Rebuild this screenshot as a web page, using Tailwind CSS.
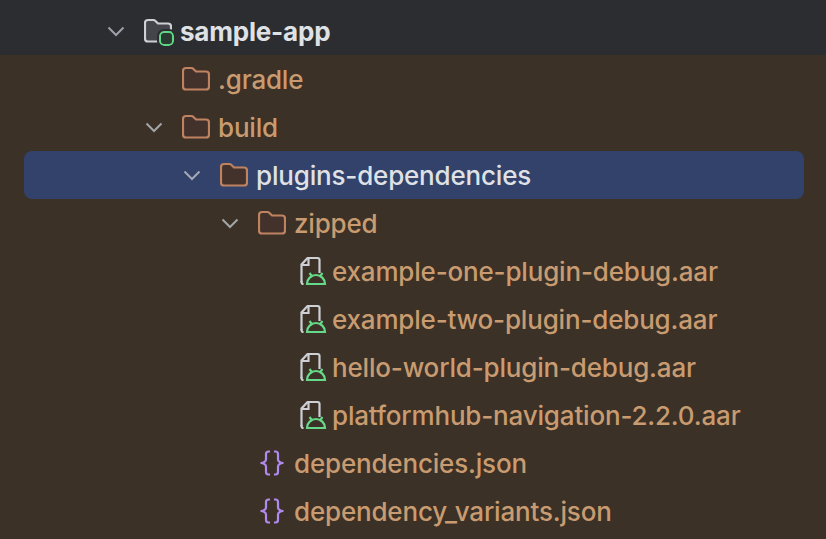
<!DOCTYPE html>
<html lang="en">
<head>
  <meta charset="UTF-8" />
  <title>Project tree</title>
  <script src="https://cdn.jsdelivr.net/npm/@tailwindcss/browser@4"></script>
</head>
<body class="w-[826px] h-[539px] overflow-hidden bg-[#3b3126] font-['Inter','Liberation_Sans',sans-serif] font-[450] text-[26px] tracking-[-0.18px] text-[#c99b70]">

  <svg class="hidden">
    <symbol id="chevron" viewBox="0 0 28 28"><path d="M6.500 10.500 14 18l7.500-7.500" fill="none" stroke="currentColor" stroke-width="2"/></symbol>
    <symbol id="folder" viewBox="0 0 28 28"><path d="M4 3h5.500a2.500 2.500 0 0 1 1.700.7L14 6.500h10a3 3 0 0 1 3 3v12a3 3 0 0 1-3 3H4a3 3 0 0 1-3-3V6a3 3 0 0 1 3-3z" fill="#43322b" stroke="#c08361" stroke-width="2.200"/></symbol>
    <symbol id="aar" viewBox="0 0 28 32">
      <path d="M2.500 27V9.500l6-6.500h10a2 2 0 0 1 2 2v13" fill="none" stroke="#ced0d6" stroke-width="2.200"/>
      <path d="M9.500 3v7h-7" fill="none" stroke="#ced0d6" stroke-width="2.200"/>
      <path d="M2.500 26v1a2 2 0 0 0 2 2" fill="none" stroke="#ced0d6" stroke-width="2.200"/>
      <path d="M8 29a9 9 0 0 1 18 0z" fill="#3b3126" stroke="#66d988" stroke-width="2.200"/>
      <path d="m10.500 18 3 4M23.500 18l-3 4" fill="none" stroke="#66d988" stroke-width="2.200"/>
    </symbol>
    <symbol id="json" viewBox="0 0 28 28">
      <path d="M12 2.500h-1.500A2.500 2.500 0 0 0 8 5v5.500c0 1.500-2 3.500-5.500 3.500 3.500 0 5.500 2 5.500 3.500V23a2.500 2.500 0 0 0 2.500 2.500H12M16 2.500h1.500A2.500 2.500 0 0 1 20 5v5.500c0 1.500 2 3.500 5.500 3.500-3.500 0-5.500 2-5.500 3.500V23a2.500 2.500 0 0 1-2.500 2.500H16" fill="none" stroke="#b18af0" stroke-width="2.200"/>
    </symbol>
  </svg>

  <!-- module header -->
  <div class="h-[55px] pt-[7px] bg-[#2b2d30]">
    <div class="h-12 flex items-center pl-[102px]">
      <svg class="w-7 h-7 mr-[14px] text-[#9da0a8]"><use href="#chevron"/></svg>
      <div class="relative w-7 h-7 mr-2">
        <svg class="w-7 h-7" viewBox="0 0 28 28"><path d="M4 3h5.500a2.500 2.500 0 0 1 1.700.7L14 6.500h10a3 3 0 0 1 3 3v12a3 3 0 0 1-3 3H4a3 3 0 0 1-3-3V6a3 3 0 0 1 3-3z" fill="#43454a" stroke="#ced0d6" stroke-width="2.200"/></svg>
        <div class="absolute left-[15px] top-[14px] w-[15px] h-[15px] rounded-[5px] bg-[#2b3a30] border-2 border-[#5fd684] outline-2 outline-[#2b2d30]"></div>
      </div>
      <span class="font-bold tracking-[-0.2px] text-[#dfe1e5]">sample-app</span>
    </div>
  </div>

  <div class="h-12 flex items-center pl-[182px] gap-2">
    <svg class="w-7 h-7"><use href="#folder"/></svg><span>.gradle</span>
  </div>
  <div class="h-12 flex items-center pl-[140px]">
    <svg class="w-7 h-7 mr-[14px] text-[#a3a5a8]"><use href="#chevron"/></svg>
    <svg class="w-7 h-7 mr-2"><use href="#folder"/></svg><span>build</span>
  </div>
  <div class="h-12 ml-6 w-[780px] rounded-lg bg-[#32426a] flex items-center pl-[154px] text-[#dfe1e5]">
    <svg class="w-7 h-7 mr-[14px] text-[#a3a8b4]"><use href="#chevron"/></svg>
    <svg class="w-7 h-7 mr-2"><use href="#folder"/></svg><span>plugins-dependencies</span>
  </div>
  <div class="h-12 flex items-center pl-[216px]">
    <svg class="w-7 h-7 mr-[14px] text-[#a3a5a8]"><use href="#chevron"/></svg>
    <svg class="w-7 h-7 mr-2"><use href="#folder"/></svg><span>zipped</span>
  </div>

  <div class="h-12 flex items-center pl-[299px]">
    <svg class="w-7 h-8 mr-[5px]"><use href="#aar"/></svg><span>example-one-plugin-debug.aar</span>
  </div>
  <div class="h-12 flex items-center pl-[299px]">
    <svg class="w-7 h-8 mr-[5px]"><use href="#aar"/></svg><span>example-two-plugin-debug.aar</span>
  </div>
  <div class="h-12 flex items-center pl-[299px]">
    <svg class="w-7 h-8 mr-[5px]"><use href="#aar"/></svg><span>hello-world-plugin-debug.aar</span>
  </div>
  <div class="h-12 flex items-center pl-[299px]">
    <svg class="w-7 h-8 mr-[5px]"><use href="#aar"/></svg><span>platformhub-navigation-2.2.0.aar</span>
  </div>

  <div class="h-12 flex items-center pl-[258px] gap-2">
    <svg class="w-7 h-7"><use href="#json"/></svg><span>dependencies.json</span>
  </div>
  <div class="h-12 flex items-center pl-[258px] gap-2">
    <svg class="w-7 h-7"><use href="#json"/></svg><span>dependency_variants.json</span>
  </div>
</body>
</html>
